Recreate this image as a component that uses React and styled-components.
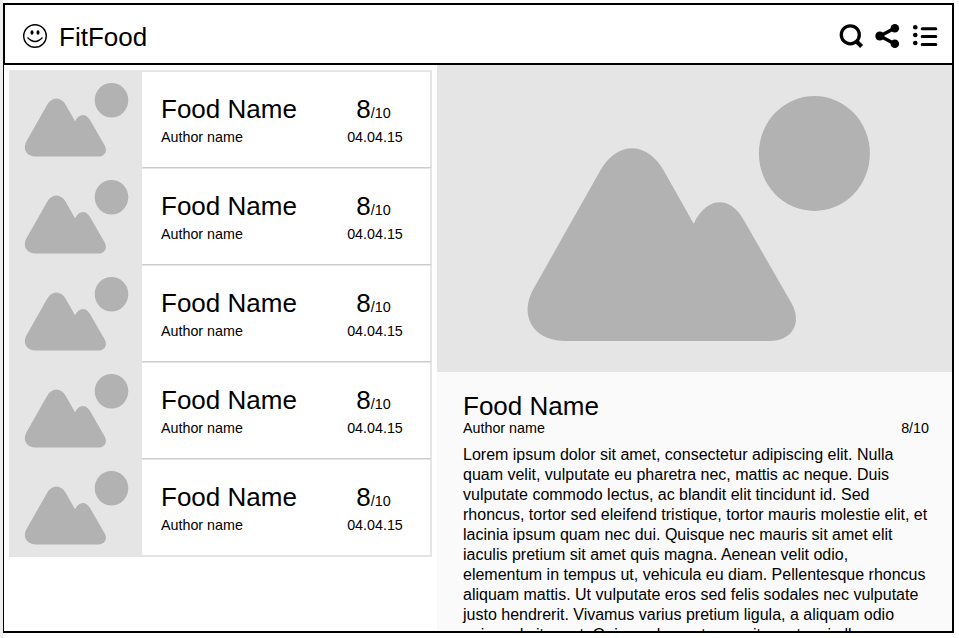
import React from 'react';
import styled, { createGlobalStyle } from 'styled-components';

const GlobalStyle = createGlobalStyle`
  * { box-sizing: border-box; }
  body {
    margin: 0;
    background: #fff;
    color: #000;
    font-family: "Liberation Sans", Arial, sans-serif;
  }
`;

const Page = styled.div`
  height: 638px;
  padding: 3px 5px 5px 0;
  border-left: 3px solid #eee;
  overflow: hidden;
`;

const Frame = styled.div`
  width: 951px;
  height: 630px;
  display: flex;
  flex-direction: column;
  border: solid #000;
  border-width: 0 2px 2px 1px;
`;

const Header = styled.header`
  flex: none;
  height: 62px;
  display: flex;
  align-items: center;
  border: solid #000;
  border-width: 2px 0 2px 1px;
  padding: 3px 14px 0 17px;
`;

const Brand = styled.h1`
  flex: 1;
  margin: 0 0 0 11px;
  padding-top: 2px;
  font-size: 26px;
  line-height: 30px;
  font-weight: 400;
`;

const Actions = styled.nav`
  display: flex;
  gap: 11px;
`;

const Icon = styled.svg`
  display: block;
  width: 26px;
  height: 26px;
`;

const Content = styled.main`
  flex: 1;
  min-height: 0;
  display: flex;
  justify-content: space-between;
`;

const FoodList = styled.ul`
  width: 423px;
  height: 487px;
  margin: 5px 0 0 5px;
  padding: 0;
  list-style: none;
  background: #e5e5e5;
`;

const FoodRow = styled.li`
  display: flex;
  align-items: flex-start;
  height: 97px;
`;

const Card = styled.div`
  flex: 1;
  display: flex;
  justify-content: space-between;
  height: ${(p) => (p.$first || p.$last ? 98 : 97)}px;
  margin-top: ${(p) => (p.$first ? 0 : 1)}px;
  border: solid #e5e5e5;
  border-width: ${(p) => (p.$first ? 2 : 1)}px 2px 0 0;
  border-bottom: ${(p) => (p.$last ? '2px solid #e5e5e5' : '1px solid #ccc')};
  padding: 22px 18px 0 19px;
  background: #fff;
`;

const ScoreColumn = styled.div`
  width: 74px;
  display: flex;
  flex-direction: column;
  align-items: center;
`;

const FoodName = styled.h2`
  margin: 0;
  font-size: 26px;
  line-height: 30px;
  font-weight: 400;
`;

const Score = styled.div`
  height: 30px;
  margin-right: 3px;
  font-size: 26px;
  line-height: 30px;
`;

const Small = styled.span`
  display: block;
  font-size: 14.3px;
  line-height: 16px;
  margin-top: ${(p) => p.$gap || 0}px;
`;

const OutOf = styled.span`
  font-size: 14.4px;
  line-height: 1;
`;

const Detail = styled.article`
  width: 515px;
  display: flex;
  flex-direction: column;
  background: #fafafa;
  overflow: hidden;
`;

const Picture = styled.svg`
  flex: none;
  display: block;
  width: ${(p) => p.$width}px;
  height: ${(p) => p.$height}px;
  background: #e5e5e5;
  fill: #b2b2b2;
`;

const DetailBody = styled.section`
  padding: 19px 23px 0 26px;
`;

const Meta = styled.div`
  display: flex;
  justify-content: space-between;
  margin-top: -1px;
`;

const Description = styled.p`
  width: 468px;
  margin: 9px 0 0;
  font-size: 16px;
  line-height: 20px;
  white-space: nowrap;
`;

const Line = styled.span`
  display: block;
`;

function Landscape({ width, height, viewBox }) {
  return (
    <Picture $width={width} $height={height} viewBox={viewBox} preserveAspectRatio="none" aria-hidden="true">
      <ellipse cx="377.4" cy="88.5" rx="55.5" ry="57.5" />
      <path d="M163 106 C180 75.5 210 75.5 227 106 L256.7 158.7 C270 131 293 131 306.3 154.3 L354 237.3 C366 258 355 276 333 276 H128 C96 276 80.5 250 97.7 221.7 Z" />
    </Picture>
  );
}

const items = Array.from({ length: 5 }, (_, id) => ({
  id,
  name: 'Food Name',
  author: 'Author name',
  score: 8,
  date: '04.04.15',
}));

const description = [
  'Lorem ipsum dolor sit amet, consectetur adipiscing elit. Nulla',
  'quam velit, vulputate eu pharetra nec, mattis ac neque. Duis',
  'vulputate commodo lectus, ac blandit elit tincidunt id. Sed',
  'rhoncus, tortor sed eleifend tristique, tortor mauris molestie elit, et',
  'lacinia ipsum quam nec dui. Quisque nec mauris sit amet elit',
  'iaculis pretium sit amet quis magna. Aenean velit odio,',
  'elementum in tempus ut, vehicula eu diam. Pellentesque rhoncus',
  'aliquam mattis. Ut vulputate eros sed felis sodales nec vulputate',
  'justo hendrerit. Vivamus varius pretium ligula, a aliquam odio',
  'euismod sit amet. Quisque laoreet sem sit amet orci ullamcorper',
];

export default function App() {
  return (
    <Page>
      <GlobalStyle />
      <Frame>
        <Header>
          <Icon viewBox="0 0 26 26">
            <circle cx="13" cy="13" r="11.3" fill="none" stroke="#000" strokeWidth="1.4" />
            <ellipse cx="10" cy="9.5" rx="1.5" ry="2.3" />
            <ellipse cx="16" cy="9.5" rx="1.5" ry="2.3" />
            <path d="M5.5 14.500 Q13 22.500 20.500 14.500" fill="none" stroke="#000" strokeWidth="1.3" />
          </Icon>
          <Brand>FitFood</Brand>
          <Actions>
            <Icon viewBox="0 0 26 26" fill="none" stroke="#000">
              <circle cx="12.3" cy="11.8" r="9" strokeWidth="3.3" />
              <path d="M18.300 18.300 L23.600 23.500" strokeWidth="4.2" />
            </Icon>
            <Icon viewBox="1 0 26 26">
              <path d="M21 5 L6 13 L21 21" fill="none" stroke="#000" strokeWidth="3.5" />
              <circle cx="20.800" cy="5.300" r="4.300" />
              <circle cx="5.800" cy="13" r="4.500" />
              <circle cx="20.800" cy="20.700" r="4.300" />
            </Icon>
            <Icon viewBox="0 0 26 26">
              <circle cx="3.300" cy="4.300" r="2.300" />
              <circle cx="3.300" cy="12" r="2.300" />
              <circle cx="3.300" cy="20" r="2.300" />
              <path d="M10.200 5.700 H23.800 M10.200 13.600 H23.800 M10.200 21.400 H23.800" stroke="#000" strokeWidth="3" strokeLinecap="round" />
            </Icon>
          </Actions>
        </Header>
        <Content>
          <FoodList>
            {items.map((item, i) => (
              <FoodRow key={item.id}>
                <Landscape width={133} height={97} viewBox="38 -12 440.4 322.8" />
                <Card $first={i === 0} $last={i === items.length - 1}>
                  <div>
                    <FoodName>{item.name}</FoodName>
                    <Small $gap={5}>{item.author}</Small>
                  </div>
                  <ScoreColumn>
                    <Score>
                      {item.score}
                      <OutOf>/10</OutOf>
                    </Score>
                    <Small $gap={5}>{item.date}</Small>
                  </ScoreColumn>
                </Card>
              </FoodRow>
            ))}
          </FoodList>
          <Detail>
            <Landscape width={515} height={307} viewBox="0 0 515 307" />
            <DetailBody>
              <FoodName>Food Name</FoodName>
              <Meta>
                <Small>Author name</Small>
                <Small>8/10</Small>
              </Meta>
              <Description>
                {description.map((line) => (
                  <Line key={line}>{line}</Line>
                ))}
              </Description>
            </DetailBody>
          </Detail>
        </Content>
      </Frame>
    </Page>
  );
}
